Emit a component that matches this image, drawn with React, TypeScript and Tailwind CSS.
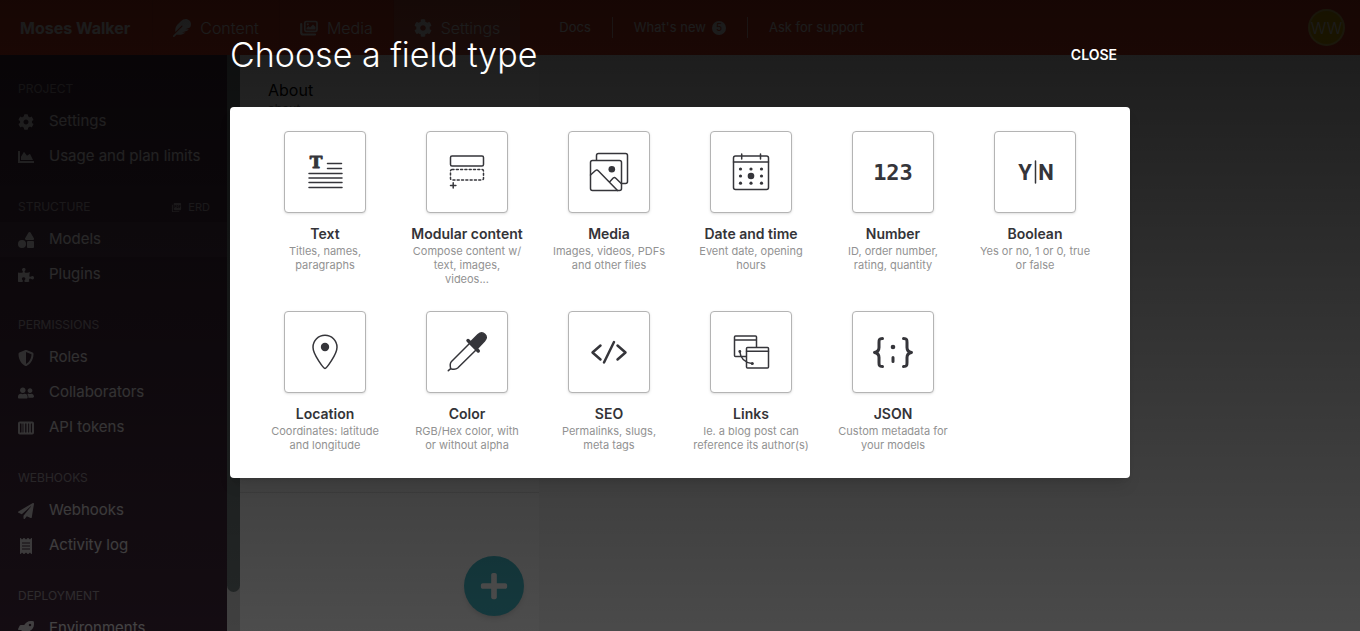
import type { ReactNode } from "react";
import {
  FaChartArea,
  FaCog,
  FaFeather,
  FaPaperPlane,
  FaPlus,
  FaPuzzlePiece,
  FaReceipt,
  FaRocket,
  FaShapes,
  FaShieldAlt,
  FaUserFriends,
} from "react-icons/fa";
import { MdPictureAsPdf } from "react-icons/md";

const INK = "#35353a";

function TokenIcon() {
  return (
    <svg viewBox="0 0 16 16" width="16" height="16" fill="none">
      <rect x="1" y="2.5" width="14" height="11" rx="0.8" stroke="currentColor" strokeWidth="2" />
      <path d="M4 3v10" stroke="currentColor" strokeWidth="1" />
      <path d="M6.300 3v10M9.300 3v10M12 3v10" stroke="currentColor" strokeWidth="1.7" />
    </svg>
  );
}

function GalleryIcon() {
  return (
    <svg viewBox="0 0 18 18" width="18" height="18" fill="none" stroke="currentColor" strokeLinejoin="round">
      <path d="M1.200 5v8.500a2 2 0 0 0 2 2H15" strokeWidth="2.200" strokeLinecap="round" />
      <rect x="4.800" y="2.500" width="12.200" height="9.800" rx="1.500" strokeWidth="1.700" />
      <path d="M6.500 10.500V9l2-2 1.500 1.500 3-3L15.500 8v2.500z" fill="currentColor" stroke="none" />
      <circle cx="7.800" cy="5.300" r="1.100" fill="currentColor" stroke="none" />
    </svg>
  );
}

type NavItem = { label: string; icon: ReactNode; active?: boolean };
type NavSection = { title: string; items: NavItem[]; erd?: boolean };

const sections: NavSection[] = [
  {
    title: "PROJECT",
    items: [
      { label: "Settings", icon: <FaCog /> },
      { label: "Usage and plan limits", icon: <FaChartArea /> },
    ],
  },
  {
    title: "STRUCTURE",
    erd: true,
    items: [
      { label: "Models", icon: <FaShapes />, active: true },
      { label: "Plugins", icon: <FaPuzzlePiece /> },
    ],
  },
  {
    title: "PERMISSIONS",
    items: [
      { label: "Roles", icon: <FaShieldAlt /> },
      { label: "Collaborators", icon: <FaUserFriends /> },
      { label: "API tokens", icon: <TokenIcon /> },
    ],
  },
  {
    title: "WEBHOOKS",
    items: [
      { label: "Webhooks", icon: <FaPaperPlane /> },
      { label: "Activity log", icon: <FaReceipt /> },
    ],
  },
  {
    title: "DEPLOYMENT",
    items: [{ label: "Environments", icon: <FaRocket /> }],
  },
];

function Icon({ children }: { children: ReactNode }) {
  return (
    <svg
      viewBox="0 0 48 48"
      width="48"
      height="48"
      fill="none"
      stroke={INK}
      strokeWidth="1.5"
      strokeLinecap="round"
      strokeLinejoin="round"
      aria-hidden="true"
    >
      {children}
    </svg>
  );
}

const fieldTypes: { name: string; hint: string; icon: ReactNode }[] = [
  {
    name: "Text",
    hint: "Titles, names,\nparagraphs",
    icon: (
      <Icon>
        <text
          x="15"
          y="20"
          textAnchor="middle"
          fontFamily="DejaVu Serif, serif"
          fontSize="17"
          fontWeight="700"
          fill={INK}
          stroke={INK}
          strokeWidth="0.900"
        >
          T
        </text>
        <path d="M26.500 15.500h14M26.500 20.500h14M8 25.500h33M8 30h33M8 34.500h33M8 39.500h33" />
      </Icon>
    ),
  },
  {
    name: "Modular content",
    hint: "Compose content w/\ntext, images,\nvideos...",
    icon: (
      <Icon>
        <rect x="7.500" y="8" width="33" height="10" rx="1.500" />
        <rect x="7.500" y="21.500" width="33" height="10.500" rx="1.500" strokeDasharray="2 2.300" />
        <path d="M10.200 34.700v5.400M7.500 37.400h5.400" />
      </Icon>
    ),
  },
  {
    name: "Media",
    hint: "Images, videos, PDFs\nand other files",
    icon: (
      <Icon>
        <path d="M11.500 12V7.500a2 2 0 0 1 2-2h27a2 2 0 0 1 2 2v26a2 2 0 0 1-2 2h-4" />
        <rect x="5.500" y="12.500" width="31" height="30" rx="2" />
        <circle cx="26.800" cy="21.200" r="3.300" fill={INK} stroke="none" />
        <path d="M5.500 27l5-4.500q1.500-1 3 .500L32.500 42.500M25 33.500l3.200-3.500q1.300-1 2.600.200l5.700 5.600" />
      </Icon>
    ),
  },
  {
    name: "Date and time",
    hint: "Event date, opening\nhours",
    icon: (
      <Icon>
        <rect x="6.500" y="8" width="35" height="33.500" rx="2" />
        <path d="M6.500 14h35M14.700 6v5M33.500 6v5" />
        <circle cx="24" cy="28" r="3.300" fill={INK} stroke="none" />
        <g fill={INK} stroke="none">
          <circle cx="13.500" cy="21" r="1.600" />
          <circle cx="24" cy="21" r="1.600" />
          <circle cx="34.500" cy="21" r="1.600" />
          <circle cx="13.500" cy="28" r="1.600" />
          <circle cx="34.500" cy="28" r="1.600" />
          <circle cx="13.500" cy="35.200" r="1.600" />
          <circle cx="24" cy="35.200" r="1.600" />
          <circle cx="34.500" cy="35.200" r="1.600" />
        </g>
      </Icon>
    ),
  },
  {
    name: "Number",
    hint: "ID, order number,\nrating, quantity",
    icon: (
      <Icon>
        <text
          x="24"
          y="32"
          textAnchor="middle"
          fontFamily="DejaVu Sans Mono, monospace"
          fontSize="22"
          fontWeight="700"
          fill={INK}
          stroke="none"
        >
          123
        </text>
      </Icon>
    ),
  },
  {
    name: "Boolean",
    hint: "Yes or no, 1 or 0, true\nor false",
    icon: (
      <Icon>
        <g fontFamily="Roboto, sans-serif" fontSize="22" fontWeight="700" fill={INK} stroke="none" textAnchor="middle">
          <text x="14" y="32">
            Y
          </text>
          <text x="35" y="32">
            N
          </text>
        </g>
        <path d="M24.500 13v22" />
      </Icon>
    ),
  },
  {
    name: "Location",
    hint: "Coordinates: latitude\nand longitude",
    icon: (
      <Icon>
        <path d="M24 40.500c-1.200 0-12-14-12-21.300a12 12 0 0 1 24 0c0 7.300-10.800 21.300-12 21.300z" />
        <circle cx="24" cy="19" r="4.200" fill={INK} stroke="none" />
      </Icon>
    ),
  },
  {
    name: "Color",
    hint: "RGB/Hex color, with\nor without alpha",
    icon: (
      <Icon>
        <path d="M27 15L8.500 33.500c-1.800 1.800-1.500 4.500-.800 7.200 2.500.800 5.300.800 7-.700L33.500 21.500M7.700 40.700L5.300 42.700" />
        <path d="M27 14.500L35 6.500c5-4.500 11 1.500 6.500 6.500l-8 8.500z" fill={INK} />
        <path d="M25 12.500L35.300 23" strokeWidth="3.400" />
      </Icon>
    ),
  },
  {
    name: "SEO",
    hint: "Permalinks, slugs,\nmeta tags",
    icon: (
      <Icon>
        <path d="M15.500 17.500L7.500 24.500l8 7M32.500 17.500l8 7-8 7M29 14L19 34.500" strokeWidth="2.500" />
      </Icon>
    ),
  },
  {
    name: "Links",
    hint: "Ie. a blog post can\nreference its author(s)",
    icon: (
      <Icon>
        <path d="M19 28.500H8.500a1 1 0 0 1-1-1V9a1 1 0 0 1 1-1h20a1 1 0 0 1 1 1v10M7.500 12h22" />
        <rect x="19.500" y="19.500" width="22" height="20.500" rx="1" />
        <path d="M19.500 23.300h22M12.800 23.500q1 10.500 12.200 12" />
        <circle cx="12.800" cy="23.500" r="1.400" fill={INK} stroke="none" />
        <circle cx="25.300" cy="35.600" r="1.500" fill={INK} stroke="none" />
      </Icon>
    ),
  },
  {
    name: "JSON",
    hint: "Custom metadata for\nyour models",
    icon: (
      <Icon>
        <path
          d="M13.500 10.500c-3.500 0-3.500 1.500-3.500 4v5c0 3-1.500 4.500-4.500 5 3 .500 4.500 2 4.500 5v5c0 2.500 0 4 3.500 4M34.500 10.500c3.500 0 3.500 1.500 3.500 4v5c0 3 1.500 4.500 4.500 5-3 .500-4.500 2-4.500 5v5c0 2.500 0 4-3.500 4M24 29.500v4"
          strokeWidth="3"
        />
        <circle cx="24" cy="19" r="2.300" fill={INK} stroke="none" />
      </Icon>
    ),
  },
];

function TopLink({ icon, label, active }: { icon: ReactNode; label: string; active?: boolean }) {
  return (
    <a
      href="#"
      className={
        active
          ? "flex h-full items-center gap-[9px] bg-[#d35a45] px-5 text-base text-white"
          : "flex h-full items-center gap-[9px] border-r border-black/5 px-5 text-base text-white"
      }
    >
      <span className="text-lg">{icon}</span>
      <span className="font-light">{label}</span>
    </a>
  );
}

function Header() {
  return (
    <header className="flex h-[55px] shrink-0 items-center bg-[#de3f25] text-white">
      <div className="flex h-full items-center border-r border-black/5 pr-[22px] pl-5 text-base font-bold">
        Moses Walker
      </div>
      <TopLink icon={<FaFeather />} label="Content" />
      <TopLink icon={<GalleryIcon />} label="Media" />
      <TopLink icon={<FaCog />} label="Settings" active />
      <nav className="ml-[18px] flex items-center text-[13px]">
        <a href="#" className="px-[21px]">
          Docs
        </a>
        <a href="#" className="flex items-center gap-[6px] border-x border-white/70 px-[21px] py-px">
          What's new
          <span className="flex size-[14px] items-center justify-center rounded-full bg-white text-[10px] text-[#de3f25]">
            5
          </span>
        </a>
        <a href="#" className="px-[21px]">
          Ask for support
        </a>
      </nav>
      <button
        type="button"
        className="mr-[15px] ml-auto size-[37px] rounded-full border-2 border-white/40 bg-[#e0b400] text-base font-light"
      >
        WW
      </button>
    </header>
  );
}

function Sidebar() {
  return (
    <aside className="w-[227px] shrink-0 overflow-hidden bg-[#42293c] pt-[26px] text-white">
      {sections.map((section) => (
        <section key={section.title} className="mb-[25px]">
          <div className="mb-[7px] flex h-4 items-center justify-between pr-[17px] pl-[18px] text-xs text-white/50">
            <h2>{section.title}</h2>
            {section.erd && (
              <a href="#" className="flex items-center gap-[6px] text-[11px]">
                <MdPictureAsPdf />
                ERD
              </a>
            )}
          </div>
          {section.items.map((item) => (
            <a
              key={item.label}
              href="#"
              className={
                item.active
                  ? "flex h-[35px] items-center gap-[15px] bg-white/5 px-[18px] text-[15px] text-white/85"
                  : "flex h-[35px] items-center gap-[15px] px-[18px] text-[15px] text-white/85"
              }
            >
              <span className="flex text-base text-white/80">{item.icon}</span>
              {item.label}
            </a>
          ))}
        </section>
      ))}
    </aside>
  );
}

export default function App() {
  return (
    <div className="relative h-screen overflow-hidden font-['Inter',sans-serif]">
      <div className="flex h-full flex-col bg-[#f7f7f7]">
        <Header />
        <div className="flex min-h-0 flex-1">
          <Sidebar />
          <div className="w-[13px] shrink-0 bg-[#d5d5d5] pb-[39px]">
            <div className="h-full rounded-b-lg bg-[#758080]" />
          </div>
          <section className="relative w-[299px] shrink-0 bg-white">
            <div className="h-[438px] border-b border-[#e4e4e4] px-7 pt-6">
              <h2 className="text-base leading-[22px]">About</h2>
              <p className="text-xs text-[#848484]">about</p>
            </div>
            <button
              type="button"
              aria-label="Add field"
              className="absolute right-[15px] bottom-[15px] flex size-[60px] items-center justify-center rounded-full bg-[#45bccb] text-[30px] text-white shadow-md"
            >
              <FaPlus />
            </button>
          </section>
          <main className="flex-1" />
        </div>
      </div>

      <div className="absolute inset-0 bg-linear-to-b from-black/90 to-black/70">
        <div
          role="dialog"
          aria-labelledby="field-type-title"
          className="mx-auto flex max-w-[900px] flex-col"
        >
          <div className="flex h-[107px] items-center justify-between pt-[2px] pr-[13px] text-white">
            <h1 id="field-type-title" className="text-[34px] font-light">
              Choose a field type
            </h1>
            <button type="button" className="text-sm font-semibold">
              CLOSE
            </button>
          </div>
          <div className="grid grid-cols-6 gap-y-[25px] rounded bg-white px-6 pt-6 pb-[26px] shadow-lg">
            {fieldTypes.map((type) => (
              <button key={type.name} type="button" className="flex flex-col items-center justify-start px-2">
                <span className="flex size-[82px] items-center justify-center rounded border border-[#b4b4b4] bg-white shadow-sm">
                  {type.icon}
                </span>
                <span className="mt-[11px] mb-px text-sm leading-[19px] font-semibold whitespace-nowrap text-[#343438]">
                  {type.name}
                </span>
                <span className="text-[11px] leading-[14px] whitespace-pre-line text-[#929292]">{type.hint}</span>
              </button>
            ))}
          </div>
        </div>
      </div>
    </div>
  );
}
